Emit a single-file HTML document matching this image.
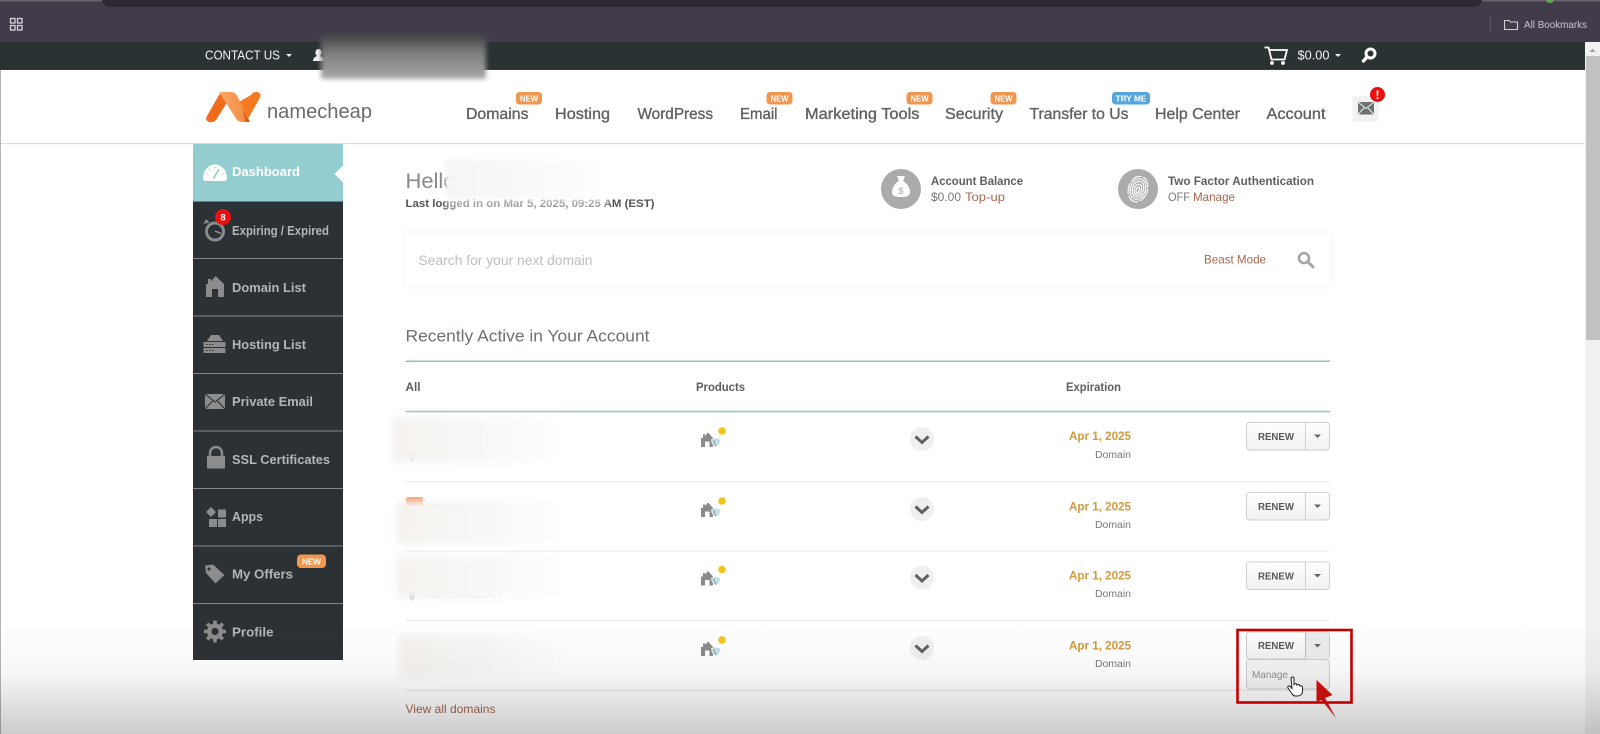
<!DOCTYPE html>
<html lang="en"><head><meta charset="utf-8"><title>Namecheap Dashboard</title>
<style>
html,body{margin:0;padding:0;background:#fff;width:1600px;height:734px;overflow:hidden}
svg{display:block;position:absolute;left:0;top:0}
text{font-family:"Liberation Sans",sans-serif}
.nav{font-size:15.5px;fill:#5e6263;stroke:#5e6263;stroke-width:.35}
.side{font-size:13px;fill:#b3b6b7;font-weight:bold}
.bd{font-size:8.5px;fill:#fff;font-weight:bold}
.top{font-size:12.5px;fill:#f2f2f2}
.hd{font-size:11.5px;fill:#5c5f60;font-weight:bold}
.t{font-size:12px;fill:#5c5f60}
.b{font-size:12px;fill:#5c5f60;font-weight:bold}
.date{font-size:11.5px;fill:#d39a3c;font-weight:bold}
.dm{font-size:10.5px;fill:#777}
.rn{font-size:10.5px;fill:#595959;font-weight:bold}
.ic{fill:#8a8c8d}
</style></head><body>
<svg width="1600" height="734" viewBox="0 0 1600 734" xmlns="http://www.w3.org/2000/svg">
<defs>
<filter id="b3" x="-20%" y="-40%" width="140%" height="180%"><feGaussianBlur stdDeviation="2.500"/></filter>
<filter id="b5" x="-20%" y="-40%" width="140%" height="180%"><feGaussianBlur stdDeviation="4"/></filter>
<linearGradient id="gr" x1="0" y1="0" x2="0" y2="1"><stop offset="0" stop-color="#3f4344"/><stop offset=".4" stop-color="#7c7c7c"/><stop offset="1" stop-color="#a8a8a8"/></linearGradient>
<linearGradient id="fade" x1="0" y1="0" x2="1" y2="0"><stop offset="0" stop-color="#f5f2ef"/><stop offset=".55" stop-color="#f9f8f7"/><stop offset="1" stop-color="#fff"/></linearGradient>
<linearGradient id="hfade" x1="0" y1="0" x2="1" y2="0"><stop offset="0" stop-color="#f6f5f4"/><stop offset=".7" stop-color="#fbfbfb"/><stop offset="1" stop-color="#fff"/></linearGradient>
<linearGradient id="btn" x1="0" y1="0" x2="0" y2="1"><stop offset="0" stop-color="#fff"/><stop offset="1" stop-color="#f1f1f1"/></linearGradient>
<linearGradient id="shade" x1="0" y1="0" x2="0" y2="1"><stop offset="0" stop-color="#000" stop-opacity="0"/><stop offset=".45" stop-color="#000" stop-opacity=".03"/><stop offset="1" stop-color="#000" stop-opacity=".2"/></linearGradient>
<linearGradient id="mid" x1="0" y1="0" x2="1" y2="0"><stop offset="0" stop-color="#f9a76a"/><stop offset="1" stop-color="#f58a3c"/></linearGradient>
<symbol id="house" viewBox="0 0 20 15" overflow="visible">
<path d="M0 15V6L2 6V2.500H4V4L7 .5 12 6V15H8.500V9.500H4V15Z" fill="#8a8a8a"/>
<path d="M10.500 7.500 L15 6 19.500 7.500 C19.500 11 18 13.500 15 15 C12 13.500 10.500 11 10.500 7.500Z" fill="#bfe0e2" stroke="#fff" stroke-width=".6"/>
<path d="M13 8 C13 11 13.500 12.500 15 14" fill="none" stroke="#7d8a8c" stroke-width=".8"/>
</symbol>
</defs>

<!-- browser chrome -->
<rect x="0" y="0" width="1600" height="42" fill="#423c4a"/>
<rect x="0" y="0" width="1600" height="1.500" fill="#67626c"/>
<rect x="102" y="-10" width="1380" height="17" rx="8" fill="#2d2833"/>
<circle cx="1550" cy="-1" r="4" fill="#6aa84f"/>
<g fill="none" stroke="#d6d4d9" stroke-width="1.300"><rect x="10.500" y="18.500" width="4.500" height="4.500"/><rect x="17.500" y="18.500" width="4.500" height="4.500"/><rect x="10.500" y="25.500" width="4.500" height="4.500"/><rect x="17.500" y="25.500" width="4.500" height="4.500"/></g>
<rect x="1490" y="18" width="1" height="13" fill="#5d5864"/>
<path d="M1504.500 20.500h4.500l1.500 1.500h7v7.500h-13z" fill="none" stroke="#d0ced3" stroke-width="1.100"/>
<text x="1524" y="28" font-size="10.500" fill="#c9c7cc" textLength="63" lengthAdjust="spacingAndGlyphs">All Bookmarks</text>

<!-- dark top nav -->
<rect x="0" y="42" width="1600" height="27.500" fill="#2b3234"/>
<rect x="0" y="68.800" width="1600" height="1" fill="#0c0f10"/>
<text class="top" x="205" y="59.500" textLength="75" lengthAdjust="spacingAndGlyphs">CONTACT US</text>
<path d="M286 54h6l-3 3z" fill="#f2f2f2"/>
<path d="M313 61c0-3 2-4 4-5-1-1-1.500-2-1.500-3.500 0-2 1.200-3.500 3-3.500s3 1.500 3 3.500c0 1.500-.5 2.500-1.500 3.500 2 1 4 2 4 5z" fill="#f2f2f2"/>
<rect x="321" y="35" width="165" height="44" fill="url(#gr)" filter="url(#b3)"/>
<path d="M1264.500 47.500h4l3 12h13l2.500-9.500h-17" fill="none" stroke="#fff" stroke-width="1.800"/>
<circle cx="1272" cy="63" r="1.900" fill="#fff"/><circle cx="1283" cy="63" r="1.900" fill="#fff"/>
<text class="top" x="1297.500" y="59.500" textLength="32" lengthAdjust="spacingAndGlyphs">$0.00</text>
<path d="M1335 54h6l-3 3z" fill="#f2f2f2"/>
<circle cx="1370.500" cy="53.500" r="4.500" fill="none" stroke="#fff" stroke-width="3"/><path d="M1367 57l-3.500 4" stroke="#fff" stroke-width="3.400" stroke-linecap="round"/>

<!-- header -->
<rect x="0" y="143" width="1585" height="1.200" fill="#dcdedf"/>
<rect x="0" y="70" width="1" height="664" fill="#b5b5b5"/>
<path d="M237 103 L251 95 Q253 91.500 257 92 Q262 93 260 97.500 L248 119 Q246 122 242 122 Z" fill="#f47a22"/>
<path d="M207 116 L219 95 Q221 92 225 92 L233 93 L216 120 Q213 123 209 122 Q204.500 120 207 116Z" fill="#f26b1d"/>
<path d="M219 92 H231 Q235 92 237 95.500 L250 122 H242 Q238 122 236 118.500 Z" fill="url(#mid)"/>
<path d="M243 110 L250 122 H245 Z" fill="#d9601a"/>
<text x="267" y="118" font-size="20.500" fill="#686c6e" textLength="105" lengthAdjust="spacingAndGlyphs">namecheap</text>

<text class="nav" x="466" y="119" textLength="62.500" lengthAdjust="spacingAndGlyphs">Domains</text>
<text class="nav" x="555" y="119" textLength="55" lengthAdjust="spacingAndGlyphs">Hosting</text>
<text class="nav" x="637.500" y="119" textLength="75.500" lengthAdjust="spacingAndGlyphs">WordPress</text>
<text class="nav" x="740" y="119" textLength="37.500" lengthAdjust="spacingAndGlyphs">Email</text>
<text class="nav" x="805" y="119" textLength="114.500" lengthAdjust="spacingAndGlyphs">Marketing Tools</text>
<text class="nav" x="945" y="119" textLength="58" lengthAdjust="spacingAndGlyphs">Security</text>
<text class="nav" x="1029.500" y="119" textLength="99" lengthAdjust="spacingAndGlyphs">Transfer to Us</text>
<text class="nav" x="1155" y="119" textLength="85" lengthAdjust="spacingAndGlyphs">Help Center</text>
<text class="nav" x="1266.500" y="119" textLength="59" lengthAdjust="spacingAndGlyphs">Account</text>

<g>
<rect x="516" y="92" width="26" height="12.500" rx="3.500" fill="#f0964f"/><text class="bd" x="520" y="101.500" textLength="18" lengthAdjust="spacingAndGlyphs">NEW</text>
<rect x="766.500" y="92" width="26" height="12.500" rx="3.500" fill="#f0964f"/><text class="bd" x="770.500" y="101.500" textLength="18" lengthAdjust="spacingAndGlyphs">NEW</text>
<rect x="906.500" y="92" width="26" height="12.500" rx="3.500" fill="#f0964f"/><text class="bd" x="910.500" y="101.500" textLength="18" lengthAdjust="spacingAndGlyphs">NEW</text>
<rect x="990.500" y="92" width="26" height="12.500" rx="3.500" fill="#f0964f"/><text class="bd" x="994.500" y="101.500" textLength="18" lengthAdjust="spacingAndGlyphs">NEW</text>
<rect x="1112" y="92" width="38" height="12.500" rx="3.500" fill="#56a4dc"/><text class="bd" x="1115.500" y="101.500" textLength="31" lengthAdjust="spacingAndGlyphs">TRY ME</text>
</g>

<rect x="1352.500" y="96" width="26" height="26" rx="3" fill="#f2f2f2"/>
<rect x="1358" y="102" width="16" height="12.500" fill="#6e7172"/>
<path d="M1358 102l8 6.500 8-6.500M1358 114.500l6-6.500M1374 114.500l-6-6.500" fill="none" stroke="#f2f2f2" stroke-width="1"/>
<circle cx="1377.500" cy="94.500" r="7.500" fill="#e8110f"/>
<text x="1377.500" y="99" text-anchor="middle" font-size="12" font-weight="bold" fill="#fff">!</text>

<!-- sidebar -->
<rect x="193" y="144" width="150" height="516" fill="#2b3134"/>
<rect x="193" y="144" width="150" height="57.500" fill="#93cdd0"/>
<path d="M343 165.500 L334.500 174 L343 182.500Z" fill="#fff"/>
<g fill="#83878a"><rect x="193" y="258" width="150" height="1"/><rect x="193" y="315.500" width="150" height="1"/><rect x="193" y="373" width="150" height="1"/><rect x="193" y="430.500" width="150" height="1"/><rect x="193" y="488" width="150" height="1"/><rect x="193" y="545.500" width="150" height="1"/><rect x="193" y="603" width="150" height="1"/></g>

<path d="M203 178 A12 13.500 0 0 1 227 178 Q227 181 224 181 H206 Q203 181 203 178Z" fill="#fff"/>
<path d="M213.500 178.500 L219 169" stroke="#93cdd0" stroke-width="1.600"/>
<g fill="#93cdd0"><circle cx="207" cy="174" r=".7"/><circle cx="209.500" cy="169.500" r=".7"/><circle cx="215" cy="167.500" r=".7"/><circle cx="223" cy="174" r=".7"/></g>
<text class="side" x="232" y="176" style="fill:#fff" textLength="68" lengthAdjust="spacingAndGlyphs">Dashboard</text>

<circle cx="215" cy="231.500" r="8.500" fill="none" stroke="#8a8c8d" stroke-width="3"/>
<path d="M206 219l-2.500 5 6-1.500z" fill="#8a8c8d"/><path d="M215 231l6 2.500" stroke="#8a8c8d" stroke-width="1.600"/>
<circle cx="223" cy="217" r="8" fill="#e8110f"/>
<text x="223" y="220.500" text-anchor="middle" font-size="9.500" font-weight="bold" fill="#fff">8</text>
<text class="side" x="232" y="235" font-size="12" textLength="97" lengthAdjust="spacingAndGlyphs">Expiring / Expired</text>

<path class="ic" d="M206 297V284L208 284V279H211V281.500L215.500 276 224 284V297H218V289H212V297Z"/>
<text class="side" x="232" y="292" textLength="74" lengthAdjust="spacingAndGlyphs">Domain List</text>

<path class="ic" d="M207 341L211 335H219L223 341Z"/><rect class="ic" x="203.500" y="342" width="22" height="5"/><rect class="ic" x="203.500" y="348" width="22" height="5"/>
<g fill="#2b3134"><rect x="206" y="344" width="1.500" height="1"/><rect x="209" y="344" width="1.500" height="1"/><rect x="212" y="344" width="1.500" height="1"/><rect x="206" y="350" width="1.500" height="1"/><rect x="209" y="350" width="1.500" height="1"/><rect x="212" y="350" width="1.500" height="1"/></g>
<text class="side" x="232" y="349" textLength="74" lengthAdjust="spacingAndGlyphs">Hosting List</text>

<rect class="ic" x="205" y="394" width="20" height="15"/>
<path d="M205 394l10 8 10-8M205 409l7.500-8M225 409l-7.500-8" fill="none" stroke="#2b3134" stroke-width="1.100"/>
<text class="side" x="232" y="406" textLength="81" lengthAdjust="spacingAndGlyphs">Private Email</text>

<rect class="ic" x="207" y="456" width="18" height="12.500"/><path d="M210 456.500v-3.500a6 6 0 0 1 12 0v3.500" fill="none" stroke="#8a8c8d" stroke-width="2.400"/>
<text class="side" x="232" y="464" textLength="98" lengthAdjust="spacingAndGlyphs">SSL Certificates</text>

<path class="ic" d="M211 507l5 5-5 5-5-5z"/><rect class="ic" x="218" y="509.500" width="8" height="8"/><rect class="ic" x="209" y="519" width="8" height="8"/><rect class="ic" x="218" y="519" width="8" height="8"/>
<text class="side" x="232" y="521" textLength="31" lengthAdjust="spacingAndGlyphs">Apps</text>

<path class="ic" d="M205 565.500 L213 564.500 L224.500 575 L215.500 583.500 L206 573Z"/><circle cx="209" cy="569" r="1.500" fill="#2b3134"/>
<text class="side" x="232" y="578.500" textLength="61" lengthAdjust="spacingAndGlyphs">My Offers</text>
<rect x="297" y="554.500" width="29" height="13.500" rx="4" fill="#f0964f"/><text class="bd" x="302" y="564.500" textLength="19" lengthAdjust="spacingAndGlyphs">NEW</text>

<g fill="#8a8c8d"><circle cx="215" cy="631.500" r="8"/><g stroke="#8a8c8d" stroke-width="3.600"><path d="M215 620.500v22M204 631.500h22M207.200 623.700l15.600 15.600M222.800 623.700l-15.600 15.600"/></g></g><circle cx="215" cy="631.500" r="3.600" fill="#2b3134"/>
<text class="side" x="232" y="636.500" textLength="41.500" lengthAdjust="spacingAndGlyphs">Profile</text>

<!-- hello -->
<text x="405.500" y="188" font-size="21" fill="#85898a" textLength="50" lengthAdjust="spacingAndGlyphs">Hello</text>
<text x="405.500" y="207" font-size="11" font-weight="bold" fill="#555" textLength="249" lengthAdjust="spacingAndGlyphs">Last logged in on Mar 5, 2025, 09:25 AM (EST)</text>
<rect x="446" y="160" width="162" height="40" fill="url(#hfade)" filter="url(#b3)"/>
<rect x="446" y="198" width="162" height="11" fill="#fff" opacity=".45" filter="url(#b3)"/>

<circle cx="901" cy="189" r="20" fill="#a9acab"/>
<path d="M897 176h8l-2 5c4 2 7 7 7 11 0 4-3 5-9 5s-9-1-9-5c0-4 3-9 7-11z" fill="#fff"/>
<text x="901" y="194" text-anchor="middle" font-size="9" fill="#a9acab">$</text>
<text class="b" x="931" y="185" textLength="92" lengthAdjust="spacingAndGlyphs">Account Balance</text>
<text class="t" x="931" y="201" style="fill:#777" textLength="30" lengthAdjust="spacingAndGlyphs">$0.00</text>
<text class="t" x="965" y="201" style="fill:#a5664f" textLength="40" lengthAdjust="spacingAndGlyphs">Top-up</text>

<circle cx="1138" cy="189" r="20" fill="#a9acab"/>
<g fill="none" stroke="#fff" stroke-width="1.150" transform="rotate(18 1138 189)"><ellipse cx="1138" cy="190" rx="1.500" ry="3"/><ellipse cx="1138" cy="189.500" rx="3.500" ry="5.500"/><ellipse cx="1138" cy="189" rx="5.500" ry="8"/><ellipse cx="1138" cy="189" rx="7.500" ry="10.500"/><ellipse cx="1138" cy="189" rx="9.500" ry="13" stroke-dasharray="12 1.500"/></g>
<text class="b" x="1168" y="185" textLength="146" lengthAdjust="spacingAndGlyphs">Two Factor Authentication</text>
<text class="t" x="1168" y="201" style="fill:#777" textLength="22" lengthAdjust="spacingAndGlyphs">OFF</text>
<text class="t" x="1193" y="201" style="fill:#a5664f" textLength="42" lengthAdjust="spacingAndGlyphs">Manage</text>

<!-- search -->
<rect x="403" y="231" width="929" height="57" rx="5" fill="#f3f3f3" filter="url(#b3)" opacity=".6"/>
<rect x="405" y="233" width="925" height="53" rx="4" fill="#fff"/>
<text x="418.500" y="265" font-size="13.500" fill="#bdbfc0" textLength="174" lengthAdjust="spacingAndGlyphs">Search for your next domain</text>
<text x="1204" y="263.500" font-size="12" fill="#a5664f" textLength="62" lengthAdjust="spacingAndGlyphs">Beast Mode</text>
<circle cx="1304" cy="258" r="5" fill="none" stroke="#a3a5a6" stroke-width="2.600"/><path d="M1308 262l5 5" stroke="#a3a5a6" stroke-width="3" stroke-linecap="round"/>

<!-- table -->
<text x="405.500" y="341.500" font-size="16.500" fill="#6d7172" textLength="244" lengthAdjust="spacingAndGlyphs">Recently Active in Your Account</text>
<rect x="405.500" y="360.500" width="924.500" height="1.500" fill="#92c3c6"/>
<text class="hd" x="405.500" y="391" textLength="15" lengthAdjust="spacingAndGlyphs">All</text>
<text class="hd" x="696" y="391" textLength="49" lengthAdjust="spacingAndGlyphs">Products</text>
<text class="hd" x="1066" y="391" textLength="55" lengthAdjust="spacingAndGlyphs">Expiration</text>
<rect x="405.500" y="410.800" width="924.500" height="1.500" fill="#92c3c6"/>
<g fill="#ececec"><rect x="405.500" y="481" width="924.500" height="1.200"/><rect x="405.500" y="550.500" width="924.500" height="1.200"/><rect x="405.500" y="620" width="924.500" height="1.200"/><rect x="405.500" y="689.800" width="924.500" height="1.200"/></g>

<!-- faint under blur -->
<rect x="406" y="497" width="17" height="9" rx="2" fill="#f39a6b"/>
<text x="430" y="510" font-size="11" fill="#d4d4d4">domain14.com</text>
<text x="424" y="459" font-size="10" fill="#e3e3e3">ADD CATEGORY</text>
<text x="424" y="598" font-size="10" fill="#e3e3e3">ADD CATEGORY</text>
<path d="M409 453h6v6l-3 3-3-3z" fill="#d4d4d4"/><path d="M409 592h6v6l-3 3-3-3z" fill="#d4d4d4"/>
<!-- blur blocks -->
<rect x="392" y="418" width="172" height="44" fill="url(#fade)" filter="url(#b5)"/>
<rect x="397" y="501" width="172" height="43" fill="url(#fade)" filter="url(#b5)"/>
<rect x="397" y="556" width="172" height="41" fill="url(#fade)" filter="url(#b5)"/>
<rect x="399" y="634" width="172" height="43" fill="url(#fade)" filter="url(#b5)"/>

<!-- row 1 -->
<use href="#house" x="701" y="432" width="20" height="15"/><circle cx="722" cy="431" r="3.800" fill="#f3c51b"/>
<circle cx="922" cy="439" r="12" fill="#f0f0f0"/><path d="M915.500 436.500l6.500 6 6.500-6" fill="none" stroke="#5f6263" stroke-width="3"/>
<text class="date" x="1069" y="440" textLength="62" lengthAdjust="spacingAndGlyphs">Apr 1, 2025</text>
<text class="dm" x="1095" y="458" textLength="36" lengthAdjust="spacingAndGlyphs">Domain</text>
<rect x="1246.500" y="422.500" width="83" height="27.500" rx="3" fill="url(#btn)" stroke="#cfcfcf"/><rect x="1305" y="423" width="1" height="27" fill="#cfcfcf"/>
<text class="rn" x="1258" y="440" textLength="36" lengthAdjust="spacingAndGlyphs">RENEW</text><path d="M1314 434.500h7l-3.500 3.500z" fill="#666"/>
<!-- row 2 -->
<use href="#house" x="701" y="502" width="20" height="15"/><circle cx="722" cy="501" r="3.800" fill="#f3c51b"/>
<circle cx="922" cy="509" r="12" fill="#f0f0f0"/><path d="M915.500 506.500l6.500 6 6.500-6" fill="none" stroke="#5f6263" stroke-width="3"/>
<text class="date" x="1069" y="510.500" textLength="62" lengthAdjust="spacingAndGlyphs">Apr 1, 2025</text>
<text class="dm" x="1095" y="528" textLength="36" lengthAdjust="spacingAndGlyphs">Domain</text>
<rect x="1246.500" y="492.500" width="83" height="27.500" rx="3" fill="url(#btn)" stroke="#cfcfcf"/><rect x="1305" y="493" width="1" height="27" fill="#cfcfcf"/>
<text class="rn" x="1258" y="510" textLength="36" lengthAdjust="spacingAndGlyphs">RENEW</text><path d="M1314 504.500h7l-3.500 3.500z" fill="#666"/>
<!-- row 3 -->
<use href="#house" x="701" y="570.500" width="20" height="15"/><circle cx="722" cy="569.500" r="3.800" fill="#f3c51b"/>
<circle cx="922" cy="577.500" r="12" fill="#f0f0f0"/><path d="M915.500 575l6.500 6 6.500-6" fill="none" stroke="#5f6263" stroke-width="3"/>
<text class="date" x="1069" y="579.500" textLength="62" lengthAdjust="spacingAndGlyphs">Apr 1, 2025</text>
<text class="dm" x="1095" y="597" textLength="36" lengthAdjust="spacingAndGlyphs">Domain</text>
<rect x="1246.500" y="562" width="83" height="27.500" rx="3" fill="url(#btn)" stroke="#cfcfcf"/><rect x="1305" y="562.500" width="1" height="27" fill="#cfcfcf"/>
<text class="rn" x="1258" y="579.500" textLength="36" lengthAdjust="spacingAndGlyphs">RENEW</text><path d="M1314 574h7l-3.500 3.500z" fill="#666"/>
<!-- row 4 -->
<use href="#house" x="701" y="641" width="20" height="15"/><circle cx="722" cy="640" r="3.800" fill="#f3c51b"/>
<circle cx="922" cy="648" r="12" fill="#f0f0f0"/><path d="M915.500 645.500l6.500 6 6.500-6" fill="none" stroke="#5f6263" stroke-width="3"/>
<text class="date" x="1069" y="649.500" textLength="62" lengthAdjust="spacingAndGlyphs">Apr 1, 2025</text>
<text class="dm" x="1095" y="667" textLength="36" lengthAdjust="spacingAndGlyphs">Domain</text>
<rect x="1246.500" y="632" width="83" height="27" rx="3" fill="url(#btn)" stroke="#cfcfcf"/><rect x="1305" y="632.500" width="1" height="26.500" fill="#bdbdbd"/>
<rect x="1306" y="633" width="23" height="26" fill="#ececec"/>
<text class="rn" x="1258" y="649" textLength="36" lengthAdjust="spacingAndGlyphs">RENEW</text><path d="M1314 644h7l-3.500 3.500z" fill="#666"/>
<rect x="1246.500" y="659.500" width="83" height="29.500" rx="3" fill="#f4f4f4" stroke="#cfcfcf"/>
<text x="1252" y="678" font-size="10.500" fill="#8c8c8c" textLength="36" lengthAdjust="spacingAndGlyphs">Manage</text>

<text x="405.500" y="713" font-size="12" fill="#a5664f" textLength="90" lengthAdjust="spacingAndGlyphs">View all domains</text>

<!-- scrollbar -->
<rect x="1585" y="42" width="15" height="692" fill="#f1f1f1"/>
<path d="M1589.500 52l3-3.500 3 3.500z" fill="#a3a3a3"/>
<rect x="1586" y="56" width="14" height="284" fill="#c1c1c1"/>

<!-- bottom shade -->
<rect x="0" y="620" width="1600" height="114" fill="url(#shade)"/>

<!-- annotation -->
<rect x="1237.500" y="630" width="114" height="72.500" fill="none" stroke="#c40000" stroke-width="2.600"/>
<path d="M1316.500 680 L1332.500 695 L1325 698 L1336 718 L1321.500 700 L1316.500 702Z" fill="#c40e0e"/>
<!-- hand cursor -->
<path d="M1291 678.500c0-2 3-2 3 0v6c1-1.500 3-1 3 .5 1-1 3-.5 3 1 1-.5 2.500 0 2.500 1.500v4c0 2.500-2 4.500-5 4.500h-2c-2 0-3-1-4-3l-3.500-5c-.8-1.500 1-3 2.300-1.500l1.700 2z" fill="#fff" stroke="#222" stroke-width="1"/>
</svg>
</body></html>
